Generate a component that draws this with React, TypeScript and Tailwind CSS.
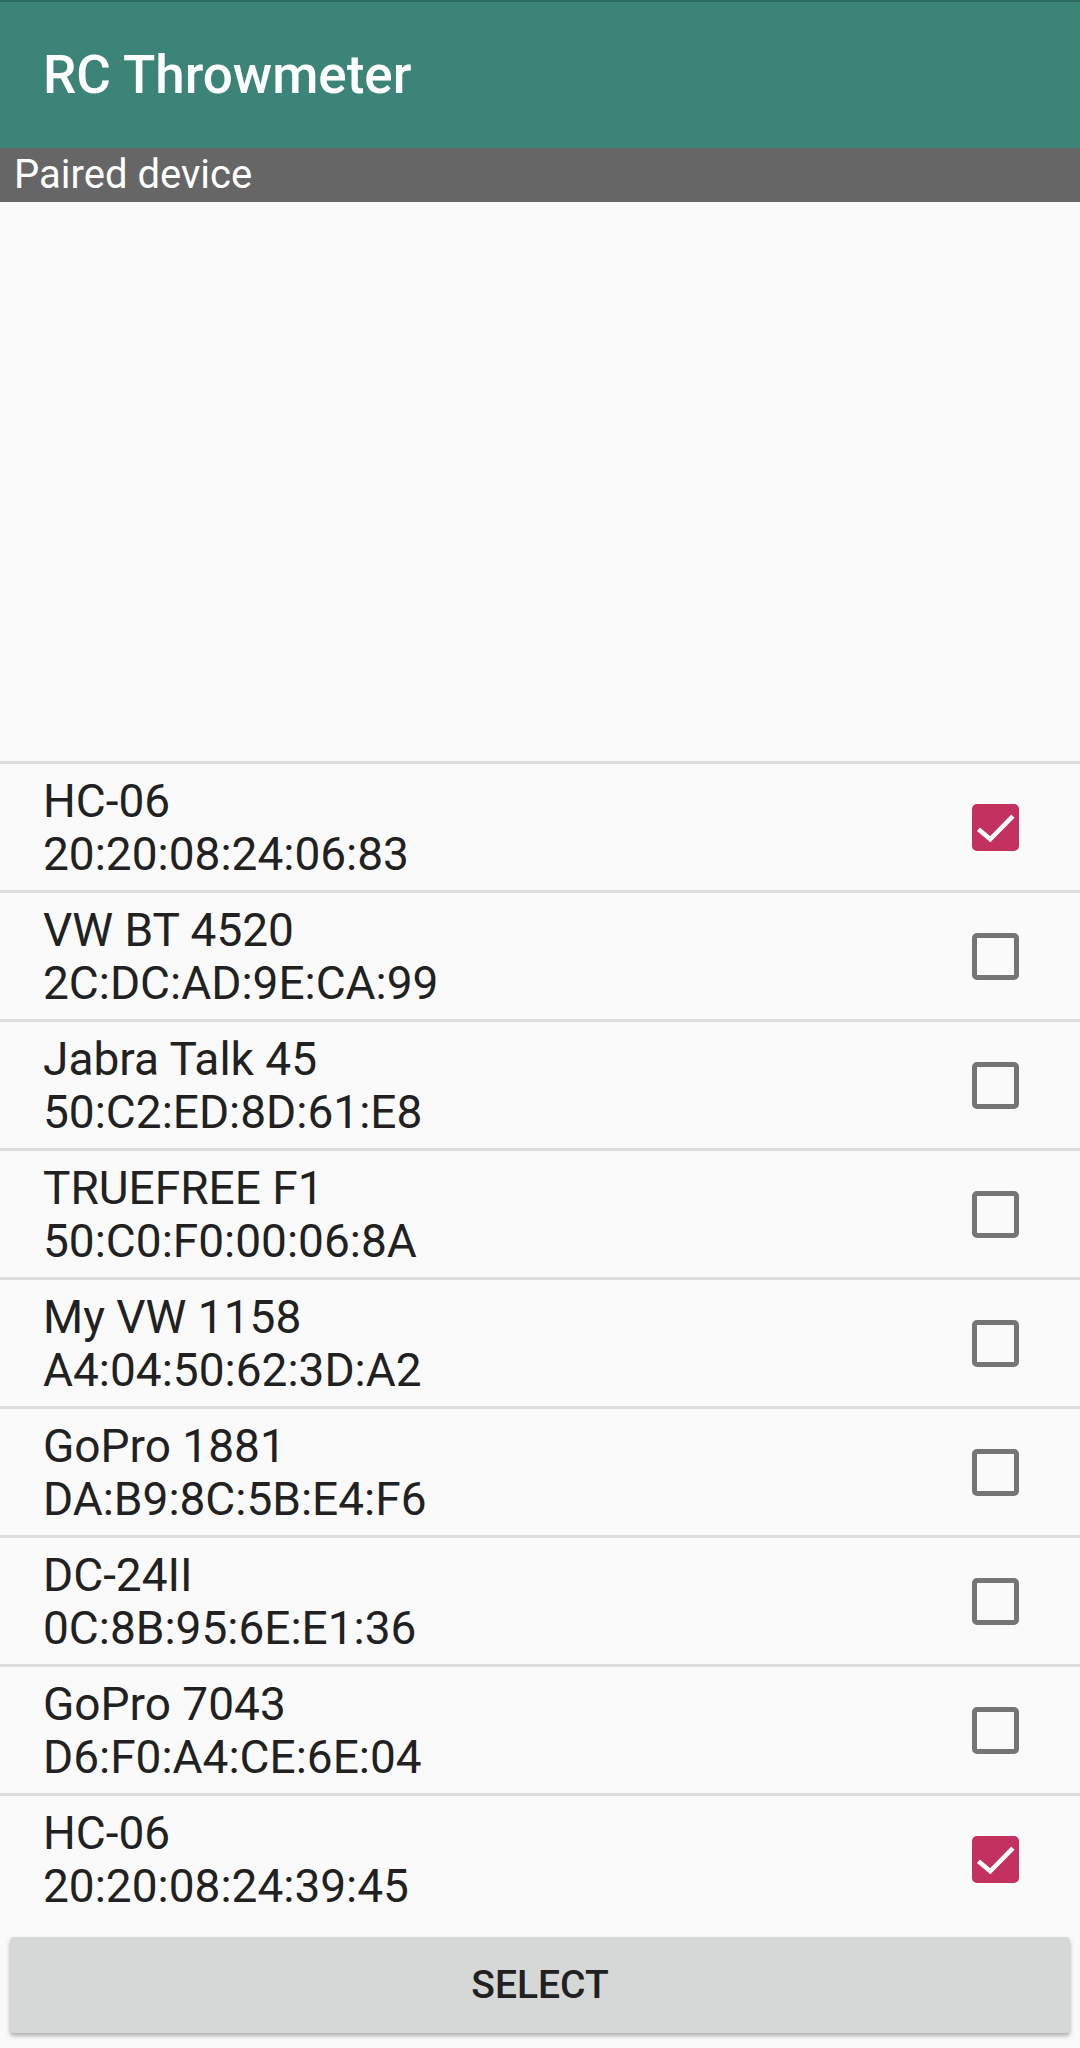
import React from "react";

const devices = [
  { name: "HC-06", mac: "20:20:08:24:06:83", checked: true },
  { name: "VW BT 4520", mac: "2C:DC:AD:9E:CA:99", checked: false },
  { name: "Jabra Talk 45", mac: "50:C2:ED:8D:61:E8", checked: false },
  { name: "TRUEFREE F1", mac: "50:C0:F0:00:06:8A", checked: false },
  { name: "My VW 1158", mac: "A4:04:50:62:3D:A2", checked: false },
  { name: "GoPro 1881", mac: "DA:B9:8C:5B:E4:F6", checked: false },
  { name: "DC-24II", mac: "0C:8B:95:6E:E1:36", checked: false },
  { name: "GoPro 7043", mac: "D6:F0:A4:CE:6E:04", checked: false },
  { name: "HC-06", mac: "20:20:08:24:39:45", checked: true },
];

function Check({ checked }: { checked: boolean }) {
  if (checked) {
    return (
      <div className="w-[47px] h-[47px] rounded-[5px] bg-[#c3325f] flex items-center justify-center">
        <svg width="47" height="47" viewBox="0 0 24 24">
          <polyline
            points="3.3,12.9 9.3,18 20.9,6.2"
            fill="none"
            stroke="#ffffff"
            strokeWidth="2.3"
          />
        </svg>
      </div>
    );
  }
  return (
    <div className="w-[47px] h-[47px] rounded-[5px] border-[5px] border-[#757575] bg-transparent" />
  );
}

export default function App() {
  return (
    <div
      className="w-[1080px] h-[2048px] bg-[#fafafa] flex flex-col overflow-hidden"
      style={{ fontFamily: "Roboto, 'Noto Sans', sans-serif" }}
    >
      <div className="h-[148px] bg-[#3b8477] border-t-2 border-[#2a6b5f] flex items-center pl-[43px]">
        <span className="text-white text-[53px] font-medium leading-none">RC Throwmeter</span>
      </div>
      <div className="h-[54px] bg-[#666666] flex items-center pl-[14px]">
        <span className="text-white text-[40px] leading-none">Paired device</span>
      </div>
      <div className="h-[559px]" />
      <div className="flex flex-col">
        {devices.map((d, i) => (
          <div key={i} className="flex flex-col">
            <div className="h-[3px] bg-[#dedede]" />
            <div className="h-[126px] flex items-center justify-between pl-[43px] pr-[61px]">
              <div className="flex flex-col text-[#212121] text-[46px] leading-[53px] pt-[2px]">
                <span>{d.name}</span>
                <span>{d.mac}</span>
              </div>
              <Check checked={d.checked} />
            </div>
          </div>
        ))}
      </div>
      <div className="px-[10px] pt-[15px]">
        <button className="w-full h-[96px] bg-[#d6d7d7] rounded-[4px] shadow-[0_3px_4px_rgba(0,0,0,0.3)] flex items-center justify-center">
          <span className="text-[#212121] text-[39px] font-medium">SELECT</span>
        </button>
      </div>
    </div>
  );
}
